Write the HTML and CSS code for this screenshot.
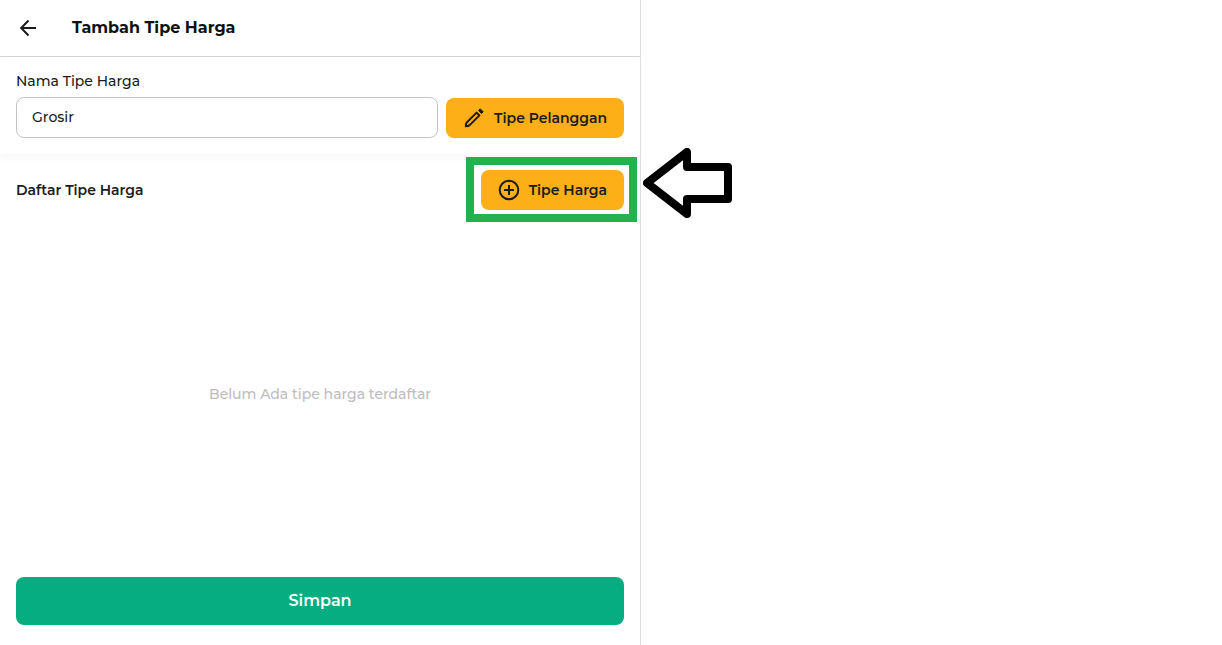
FILE: index.html
```html
<!DOCTYPE html>
<html lang="id">
<head>
  <meta charset="UTF-8">
  <meta name="viewport" content="width=device-width, initial-scale=1.0">
  <title>Tambah Tipe Harga</title>
  <link rel="stylesheet" href="styles.css">
</head>
<body>

  <div class="layout">
    <main class="panel">
      <header class="topbar">
        <button type="button" class="back" aria-label="Kembali">
          <svg width="24" height="24" viewBox="0 0 24 24" fill="none" stroke="currentColor" stroke-width="2">
            <path d="M20 12H5.5M12.5 4.5L5.2 12L12.5 19.5"/>
          </svg>
        </button>
        <h1>Tambah Tipe Harga</h1>
      </header>

      <form class="content" id="price-form">
        <section class="name-section">
          <label for="nama">Nama Tipe Harga</label>
          <div class="name-row">
            <input type="text" id="nama" name="nama" value="Grosir">
            <button type="button" class="btn">
              <svg width="24" height="24" viewBox="0 0 24 24" fill="none" stroke="currentColor" stroke-width="2" stroke-linejoin="round">
                <path d="M14.6 6.6L4.6 16.6C4 17.4 3.8 18.8 3.8 20.2C5.2 20.2 6.6 20 7.4 19.4L17.4 9.4Z"/>
                <path d="M16.5 4.5L18.2 2.8L21.2 5.8L19.5 7.5Z" fill="currentColor" stroke-width="1"/>
              </svg>
              Tipe Pelanggan
            </button>
          </div>
        </section>

        <section class="list-section">
          <div class="list-head">
            <h2>Daftar Tipe Harga</h2>
            <div class="marked">
              <button type="button" class="btn">
                <svg width="24" height="24" viewBox="0 0 24 24" fill="none" stroke="currentColor" stroke-width="2">
                  <circle cx="12" cy="12" r="9.3"/>
                  <path d="M12 7V17M7 12H17"/>
                </svg>
                Tipe Harga
              </button>
              <svg class="pointer" width="90" height="70" viewBox="0 0 90 70" fill="none" stroke="#000" stroke-width="8" stroke-linejoin="round">
                <path d="M4 35L44 4V19H85V51H44V66Z"/>
              </svg>
            </div>
          </div>
          <p class="empty">Belum Ada tipe harga terdaftar</p>
        </section>

        <button type="submit" class="save">Simpan</button>
      </form>
    </main>
    <div class="detail"></div>
  </div>

  <script>
    document.getElementById('price-form').addEventListener('submit', function(event) {
      event.preventDefault();
    });
  </script>

</body>
</html>
```

FILE: styles.css
```css
* {
  box-sizing: border-box;
}

body {
  font-family: Montserrat, Inter, sans-serif;
  font-size: 14px;
  font-weight: 500;
  line-height: 20px;
  background-color: #fff;
  color: #1b1b1b;
  margin: 0;
}

h1, h2, p {
  margin: 0;
}

button, input {
  font: inherit;
  color: inherit;
}

button {
  border: none;
  cursor: pointer;
}

svg {
  display: block;
  flex: none;
}

.layout {
  display: grid;
  grid-template-columns: 11fr 10fr;
  min-height: 100vh;
}

.panel {
  display: flex;
  flex-direction: column;
}

.detail {
  border-left: 1px solid #dedede;
}

.topbar {
  display: flex;
  align-items: center;
  gap: 32px;
  padding: 16px;
  border-bottom: 1px solid #d4d4d4;
}

.topbar h1 {
  font-size: 16px;
  line-height: 24px;
  font-weight: 700;
  color: #111;
}

.back {
  background: none;
  padding: 0;
}

.content {
  display: flex;
  flex-direction: column;
  flex: 1;
}

.name-section {
  padding: 14px 16px 16px;
  box-shadow: 0 4px 8px rgba(0, 0, 0, 0.03);
}

.name-section label {
  display: block;
  margin-bottom: 6px;
}

.name-row {
  display: flex;
  align-items: center;
  gap: 8px;
}

.name-row input {
  flex: 1;
  min-width: 0;
  height: 41px;
  padding: 0 15px 2px;
  border: 1px solid #c4c4c4;
  border-radius: 8px;
  background-color: #fff;
}

.btn {
  display: flex;
  align-items: center;
  gap: 8px;
  height: 40px;
  padding: 0 17px 0 16px;
  border-radius: 8px;
  background-color: #fcaf17;
  font-weight: 600;
  white-space: nowrap;
}

.list-section {
  display: flex;
  flex-direction: column;
  flex: 1;
  padding: 16px 16px 0;
}

.list-head {
  display: flex;
  align-items: center;
  justify-content: space-between;
}

.list-head h2 {
  font-size: 14px;
  font-weight: 600;
}

/* green frame and arrow around the add button */
.marked {
  position: relative;
}

.marked::before {
  content: "";
  position: absolute;
  inset: -13px -13px -12px -15px;
  border: 8px solid #22b14c;
  pointer-events: none;
}

.pointer {
  position: absolute;
  left: 100%;
  top: -22px;
  margin-left: 19px;
}

.empty {
  margin: auto;
  color: #bdbdbd;
}

.save {
  height: 48px;
  margin: 0 16px 20px;
  border-radius: 8px;
  background-color: #05ad80;
  color: #fff;
  font-size: 16px;
  font-weight: 600;
}
```
